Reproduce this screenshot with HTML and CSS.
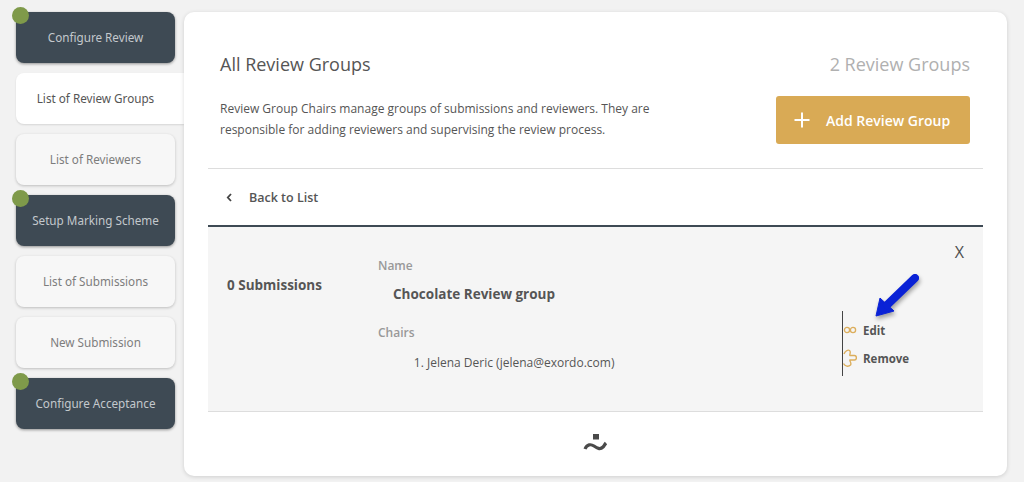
FILE: index.html
```html
<!DOCTYPE html>
<html lang="en">
<head>
<meta charset="utf-8">
<title>All Review Groups</title>
<link rel="stylesheet" href="styles.css">
</head>
<body>
<div class="page">
  <nav class="side">
    <a class="step dark"><i class="dot"></i>Configure Review</a>
    <a class="step active">List of Review Groups</a>
    <a class="step">List of Reviewers</a>
    <a class="step dark"><i class="dot"></i>Setup Marking Scheme</a>
    <a class="step">List of Submissions</a>
    <a class="step">New Submission</a>
    <a class="step dark"><i class="dot"></i>Configure Acceptance</a>
  </nav>
  <main class="card">
    <header class="head">
      <div class="head-left">
        <h1 class="title">All Review Groups</h1>
        <p class="intro">Review Group Chairs manage groups of submissions and reviewers. They are responsible for adding reviewers and supervising the review process.</p>
      </div>
      <div class="head-right">
        <div class="count">2 Review Groups</div>
        <button class="add"><svg class="plus" width="16" height="16" viewBox="0 0 16 16"><path d="M8 .5v15M.5 8h15" stroke="#fff" stroke-width="2" fill="none"/></svg>Add Review Group</button>
      </div>
    </header>
    <div class="back"><svg class="chev" width="7" height="9" viewBox="0 0 7 9"><path d="M5 1 1.800 4.500 5 8" stroke="#444" stroke-width="1.800" fill="none"/></svg>Back to List</div>
    <section class="panel">
      <div class="subs">0 Submissions</div>
      <div class="info">
        <div class="label">Name</div>
        <div class="name">Chocolate Review group</div>
        <div class="label chairs">Chairs</div>
        <ol class="list"><li>Jelena Deric (jelena@exordo.com)</li></ol>
      </div>
      <div class="actions">
        <div class="action"><svg class="ico" width="14" height="14" viewBox="0 0 14 14"><g fill="none" stroke="#dcae5c" stroke-width="1.300"><circle cx="4" cy="7" r="2.600"/><circle cx="10" cy="7" r="2.600"/></g></svg>Edit</div>
        <div class="action"><svg class="ico" width="14" height="18" viewBox="0 0 14 18"><path d="M1 5C2 2 5 .5 6.500 1.500 8.500 3 6 6 7 6.500H11.500C14 6.500 14 11 11.500 11H7C6 11.500 9 14 7.500 16 5.500 18 2 17.500 .5 14.500" fill="none" stroke="#dcae5c" stroke-width="1.400"/></svg>Remove</div>
      </div>
      <div class="close">X</div>
      <svg class="arrow" width="56" height="56" viewBox="0 0 56 56"><path d="M6 48 10 30 24 43z" fill="#0a22d6" stroke="#0a22d6" stroke-width="1" stroke-linejoin="round"/><path d="M17 37 45 10" fill="none" stroke="#0a22d6" stroke-width="8" stroke-linecap="round"/></svg>
    </section>
    <footer class="foot"><svg width="26" height="20" viewBox="0 0 26 20"><rect x="10" y="0" width="6" height="5.500" fill="#4a4a4a"/><path d="M2 15c2-5 6-5 9-3s6 4 9 1c1-1 2-3 3-4" fill="none" stroke="#4a4a4a" stroke-width="3.200"/></svg></footer>
  </main>
</div>
</body>
</html>
```
FILE: styles.css
```css
* { box-sizing: border-box; }
html, body { margin: 0; height: 100%; }
body { background: #f2f2f2; font-family: "Open Sans", sans-serif; color: #4a4a4a; overflow: hidden; }
.page { display: flex; align-items: flex-start; padding: 12px 17px 6px 16px; height: 482px; }
.side { width: 168px; flex: none; display: flex; flex-direction: column; gap: 10px; }
.step { position: relative; display: flex; align-items: center; justify-content: center; width: 159px; height: 51px; padding-bottom: 1px; background: #f7f7f7; color: #7d7d7d; border-radius: 8px; font-family: "Noto Sans", sans-serif; font-size: 11.700px; box-shadow: 0 1px 3px rgba(0,0,0,.22); }
.step.dark { background: #3e4a54; color: #c3c8cc; box-shadow: 0 1px 3px rgba(0,0,0,.4); }
.step.active { width: 168px; background: #fff; color: #555; border-radius: 8px 0 0 8px; box-shadow: 0 1px 2px rgba(0,0,0,.12); padding-right: 9px; }
.dot { position: absolute; left: -4px; top: -5px; width: 17px; height: 17px; border-radius: 50%; background: #7f9a4a; }
.card { width: 823px; height: 464px; background: #fff; border-radius: 10px; box-shadow: 0 1px 4px rgba(0,0,0,.15); padding: 0 24px; display: flex; flex-direction: column; position: relative; }
.head { display: flex; justify-content: space-between; height: 157px; border-bottom: 1px solid #ddd; padding: 40px 13px 0 12px; }
.head-left { width: 480px; }
.title { margin: 0; font-size: 18px; font-weight: 400; line-height: 24px; color: #555; }
.intro { margin: 22px 0 0; font-size: 12px; line-height: 21px; color: #555; }
.head-right { display: flex; flex-direction: column; align-items: flex-end; }
.count { font-size: 18px; line-height: 24px; color: #b0b0b0; }
.add { display: flex; align-items: center; margin-top: 20px; width: 194px; height: 48px; padding: 0 0 0 18px; border: 0; border-radius: 3px; background: #d9aa55; color: #fff; font: 600 14px "Open Sans", sans-serif; }
.plus { margin-right: 16px; }
.back { display: flex; align-items: center; height: 58px; padding-left: 18px; font-size: 12.500px; font-weight: 600; color: #555; border-bottom: 2px solid #3e4a54; }
.chev { margin-right: 16px; }
.panel { position: relative; display: flex; height: 185px; background: #f5f5f5; border-bottom: 1px solid #ddd; }
.subs { width: 170px; padding: 48px 0 0 19px; font-size: 13.500px; font-weight: 700; line-height: 20px; color: #555; }
.info { width: 464px; padding-top: 31px; }
.label { font-size: 12px; font-weight: 600; line-height: 16px; color: #999; }
.name { margin: 10px 0 0 15px; font-size: 13.500px; font-weight: 700; line-height: 20px; color: #555; }
.chairs { margin-top: 21px; }
.list { margin: 13px 0 0; padding-left: 49px; font-size: 12px; line-height: 18px; color: #555; }
.actions { align-self: flex-start; margin-top: 84px; height: 65px; border-left: 1px solid #444; padding-top: 10px; width: 100px; }
.action { display: flex; align-items: center; height: 18px; margin-bottom: 10px; font-size: 11.500px; font-weight: 700; color: #555; }
.ico { flex: none; margin-right: 6px; }
.close { position: absolute; right: 19px; top: 15px; font-size: 16px; line-height: 20px; color: #4d4d4d; }
.arrow { position: absolute; left: 662px; top: 41px; filter: drop-shadow(1px 3px 2px rgba(0,0,0,.35)); }
.foot { flex: 1; display: flex; align-items: center; justify-content: center; }
```
